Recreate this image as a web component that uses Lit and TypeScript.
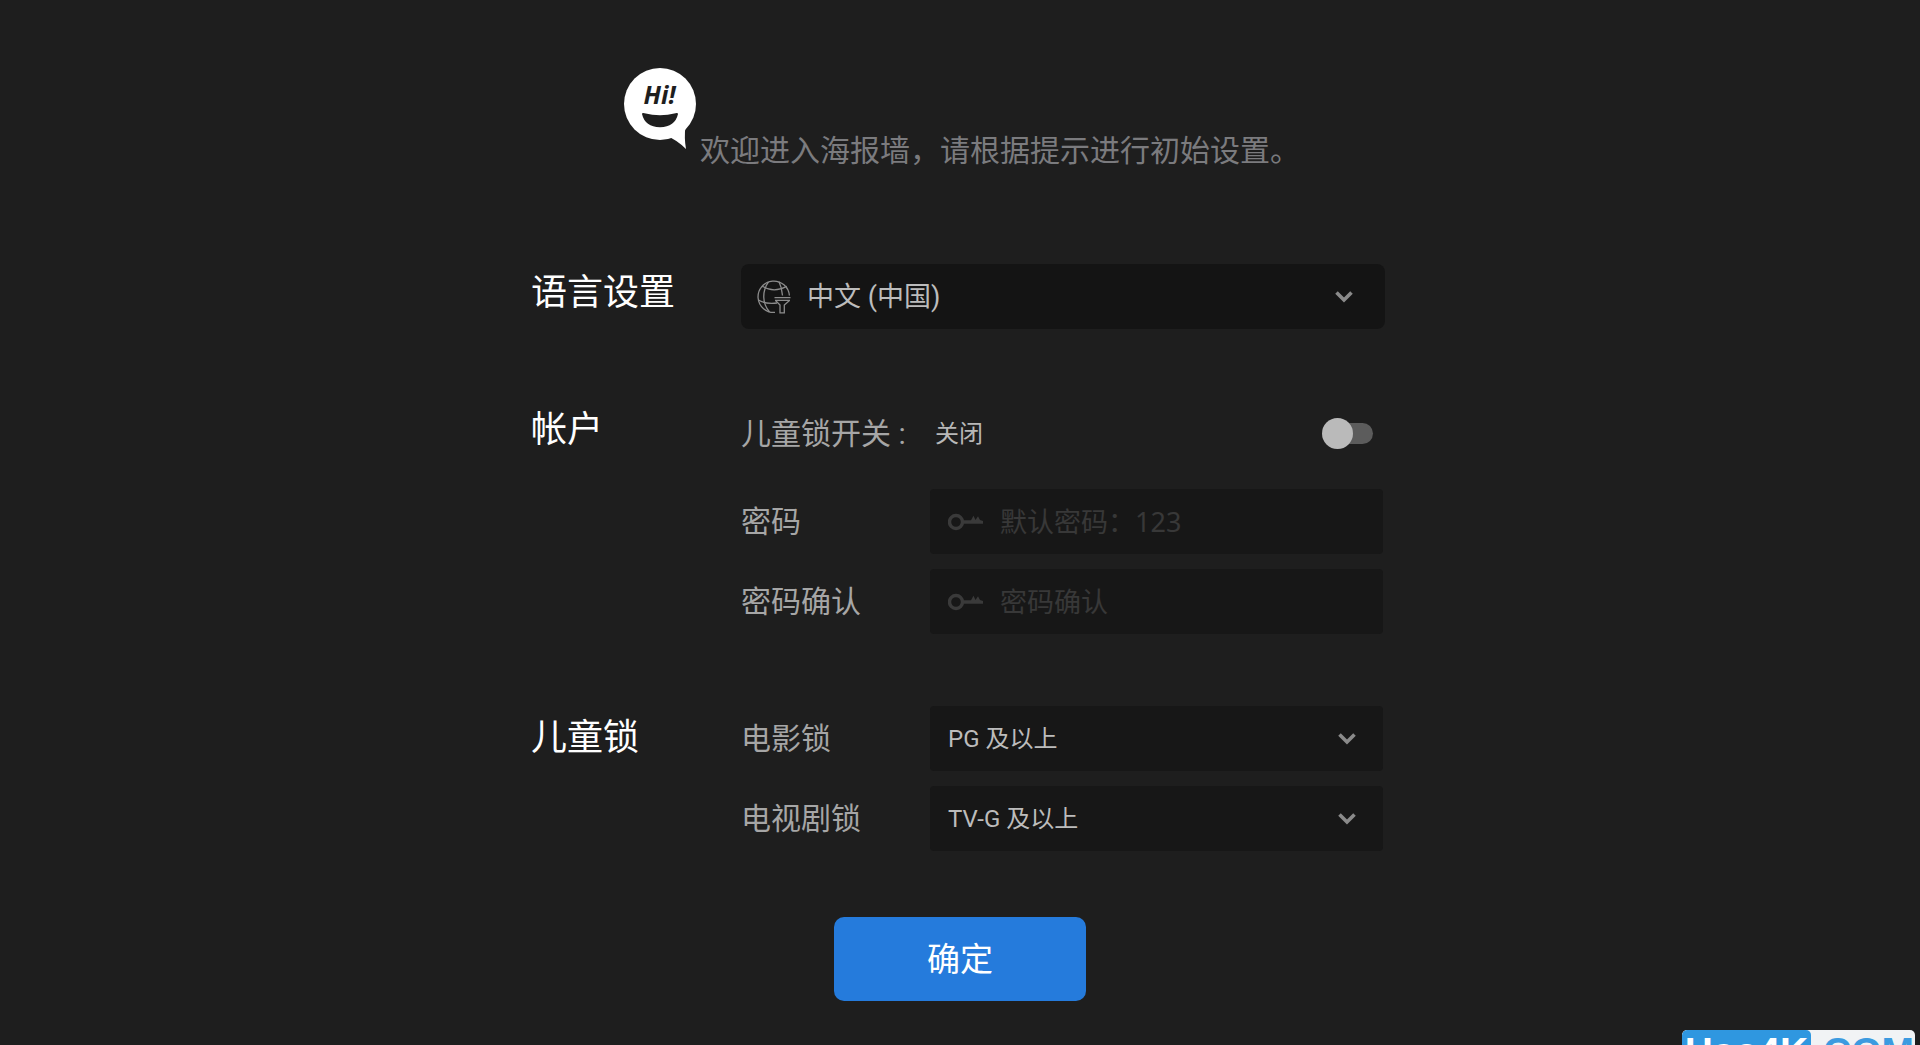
import { LitElement, html, css, svg } from "lit";
import { customElement, property, state } from "lit/decorators.js";

const chevron = html`<svg class="chevron" width="18" height="12" viewBox="0 0 18 12" aria-hidden="true">
  <path d="M1.5 1.5 9 9 16.5 1.5" fill="none" stroke="#8a8a8a" stroke-width="3.6" />
</svg>`;

const globe = svg`
  <g fill="none" stroke="#8c8c8c" stroke-width="1.3">
    <path d="M32.4 15.500A15.700 15.700 0 1 0 18 32.400" />
    <path d="M11.500 1.800C5 11 5 23 12.500 32M22 1.800Q25 8 25.500 15.500" />
    <path d="M5.200 6.200Q17 13.500 29.800 6.200M1.500 20Q9 24.500 20 23" />
    <path d="M17.500 17.700H33.500M18 20.300H33M18.500 20.500 23 25V32.800H27.300V25L32.500 20.500" />
  </g>`;

const fieldStyles = css`
  :host {
    display: block;
    min-width: 0;
  }
  .box {
    display: grid;
    grid-template-columns: auto 1fr auto;
    align-items: center;
    height: 65px;
    border-radius: 4px;
    background: #171717;
  }
  .box.strong {
    border-radius: 8px;
    background: #141414;
  }
  .control {
    grid-area: 1 / 1 / 2 / 4;
    box-sizing: border-box;
    width: 100%;
    height: 65px;
    margin: 0;
    border: 0;
    border-radius: inherit;
    background: transparent;
    color: #bcbcbc;
    font-family: Roboto, "Noto Sans CJK SC", sans-serif;
    font-size: 24px;
    text-rendering: optimizeLegibility;
    appearance: none;
    outline-offset: -2px;
  }
  .control:focus-visible {
    outline: 2px solid #257bdc;
  }
  .lead {
    grid-area: 1 / 1;
    pointer-events: none;
  }
  .chevron {
    grid-area: 1 / 3;
    pointer-events: none;
  }
`;

@customElement("choice-field")
class ChoiceField extends LitElement {
  static styles = [
    fieldStyles,
    css`
      .control {
        padding: 0 48px 0 18px;
      }
      .chevron {
        margin-right: 27px;
      }
      .strong .control {
        padding-left: 66px;
        font-size: 27px;
      }
      .strong .chevron {
        margin-right: 32px;
      }
      .lead {
        margin-left: 16px;
      }
      option {
        background: #171717;
      }
    `,
  ];
  @property() label = "";
  @property({ type: Array }) options: string[] = [];
  @property({ type: Boolean }) language = false;

  render() {
    return html`<div class="box ${this.language ? "strong" : ""}">
      <select class="control" aria-label=${this.label}>
        ${this.options.map((o) => html`<option>${o}</option>`)}
      </select>
      ${this.language
        ? html`<svg class="lead" width="34" height="34" viewBox="0 0 34 34" aria-hidden="true">${globe}</svg>`
        : ""}
      ${chevron}
    </div>`;
  }
}

@customElement("secret-field")
class SecretField extends LitElement {
  static styles = [
    fieldStyles,
    css`
      .control {
        padding: 0 18px 0 70px;
        font-family: "Noto Sans", "Noto Sans CJK SC", sans-serif;
        font-size: 27px;
      }
      .control::placeholder {
        color: #383838;
        opacity: 1;
      }
      .lead {
        margin-left: 18px;
      }
    `,
  ];
  @property() label = "";
  @property() hint = "";
  @property({ type: Boolean }) locked = false;

  render() {
    return html`<div class="box">
      <input class="control" type="password" aria-label=${this.label} placeholder=${this.hint} ?disabled=${this.locked} />
      <svg class="lead" width="36" height="20" viewBox="0 0 36 20" aria-hidden="true">
        <circle cx="8" cy="10" r="6.500" fill="none" stroke="#3a3a3a" stroke-width="3.4" />
        <path d="M15 8.300H23L25.500 3.800 27.500 8 30 4.300 32 8 35 9V11.700H15Z" fill="#3a3a3a" />
      </svg>
    </div>`;
  }
}

@customElement("app-root")
class AppRoot extends LitElement {
  static styles = css`
    :host {
      display: block;
      font-family: Roboto, "Noto Sans CJK SC", sans-serif;
    }
    .page {
      position: relative;
      box-sizing: border-box;
      min-height: 100vh;
      padding: 68px 24px 40px;
      overflow: hidden;
      background: #1e1e1e;
      color: #a6a6a6;
    }
    .welcome {
      display: flex;
      justify-content: center;
      align-items: flex-end;
      gap: 4px;
      margin-bottom: 92px;
      padding-left: 4px;
    }
    .bubble {
      flex: none;
      margin-bottom: 23px;
    }
    .hi {
      font: italic 700 25px "Open Sans", "Noto Sans", sans-serif;
    }
    .welcome-text {
      margin: 0;
      color: #7b7b7e;
      font-size: 30px;
      font-weight: 400;
      line-height: 42px;
    }
    .form {
      max-width: 858px;
      margin: 0 auto;
    }
    .section {
      display: grid;
      grid-template-columns: 210px 1fr;
      margin: 0 0 72px;
      padding: 0 4px 0 0;
    }
    .title {
      margin: 0;
      color: #fff;
      font-size: 36px;
      font-weight: 400;
      line-height: 58px;
    }
    .section.lock {
      margin-bottom: 66px;
    }
    .section.lock .title {
      line-height: 65px;
    }
    .rows {
      display: flex;
      flex-direction: column;
      gap: 15px;
      padding-right: 2px;
    }
    .rows.wide {
      padding-right: 0;
    }
    .row {
      display: grid;
      grid-template-columns: 189px 1fr;
      align-items: center;
      min-height: 65px;
    }
    .row.toggle {
      margin-bottom: 8px;
    }
    .label {
      font-size: 30px;
      line-height: 44px;
      white-space: nowrap;
    }
    .switch-line {
      display: flex;
      align-items: center;
      justify-content: space-between;
      padding: 0 10px 0 5px;
    }
    .status {
      color: #b8b8b8;
      font-size: 24px;
      line-height: 36px;
    }
    .switch {
      display: flex;
      align-items: center;
      width: 51px;
      height: 31px;
      margin: 0;
      border-radius: 16px;
      appearance: none;
      cursor: pointer;
    }
    .switch::before {
      content: "";
      width: 42px;
      height: 21px;
      margin-left: 9px;
      border-radius: 11px;
      background: #5c5c5c;
    }
    .switch::after {
      content: "";
      flex: none;
      width: 31px;
      height: 31px;
      margin-left: -51px;
      border-radius: 50%;
      background: #bababa;
    }
    .switch:checked::after {
      margin-left: -31px;
    }
    .switch:checked::before {
      background: #257bdc;
    }
    .actions {
      display: flex;
      justify-content: center;
    }
    .confirm {
      width: 252px;
      height: 84px;
      padding: 0 0 4px;
      border: 0;
      border-radius: 10px;
      background: #257bdc;
      color: #fff;
      font-family: inherit;
      font-size: 33px;
      cursor: pointer;
    }
    .badge {
      position: absolute;
      top: calc(100vh - 15px);
      right: 5px;
      display: flex;
      height: 48px;
      border-radius: 5px;
      overflow: hidden;
      background: #f1f3f5;
      color: #3c9be0;
      font: 700 39px/44px "Liberation Sans", Arial, sans-serif;
      text-decoration: none;
    }
    .badge-name {
      padding: 0 3px;
      border-radius: 5px;
      background: #2f97e0;
      color: #fff;
    }
    .badge-domain {
      padding: 0 1px;
    }
  `;

  @state() private childLock = false;

  render() {
    return html`<main class="page">
      <header class="welcome">
        <svg class="bubble" width="72" height="81" viewBox="0 0 72 81" role="img" aria-label="Hi!">
          <circle cx="36" cy="36" r="36" fill="#fff" />
          <path d="M43 68Q53 72 62 81Q60 70 61.500 58Z" fill="#fff" />
          <text class="hi" x="19.500" y="35.500" fill="#1e1e1e">Hi!</text>
          <path d="M18 46Q18 44.500 20.500 45.200Q36 49.500 51.500 45.200Q54 44.500 54 46Q51 59 36 59.200Q21 59 18 46Z" fill="#1e1e1e" />
        </svg>
        <h1 class="welcome-text">欢迎进入海报墙，请根据提示进行初始设置。</h1>
      </header>

      <form class="form" @submit=${(e: Event) => e.preventDefault()}>
        <section class="section">
          <h2 class="title">语言设置</h2>
          <div class="rows wide">
            <choice-field language label="语言设置" .options=${["中文 (中国)"]}></choice-field>
          </div>
        </section>

        <section class="section">
          <h2 class="title">帐户</h2>
          <div class="rows">
            <div class="row toggle">
              <label class="label" for="child-lock">儿童锁开关 :</label>
              <div class="switch-line">
                <span class="status">${this.childLock ? "开启" : "关闭"}</span>
                <input
                  class="switch"
                  id="child-lock"
                  type="checkbox"
                  role="switch"
                  .checked=${this.childLock}
                  @change=${(e: Event) => (this.childLock = (e.target as HTMLInputElement).checked)}
                />
              </div>
            </div>
            <div class="row">
              <span class="label">密码</span>
              <secret-field label="密码" hint="默认密码：123" ?locked=${!this.childLock}></secret-field>
            </div>
            <div class="row">
              <span class="label">密码确认</span>
              <secret-field label="密码确认" hint="密码确认" ?locked=${!this.childLock}></secret-field>
            </div>
          </div>
        </section>

        <section class="section lock">
          <h2 class="title">儿童锁</h2>
          <div class="rows">
            <div class="row">
              <span class="label">电影锁</span>
              <choice-field label="电影锁" .options=${["PG 及以上"]}></choice-field>
            </div>
            <div class="row">
              <span class="label">电视剧锁</span>
              <choice-field label="电视剧锁" .options=${["TV-G 及以上"]}></choice-field>
            </div>
          </div>
        </section>

        <div class="actions">
          <button class="confirm" type="submit">确定</button>
        </div>
      </form>

      <a class="badge" href="#"><span class="badge-name">Hao4K</span><span class="badge-domain">.COM</span></a>
    </main>`;
  }
}
